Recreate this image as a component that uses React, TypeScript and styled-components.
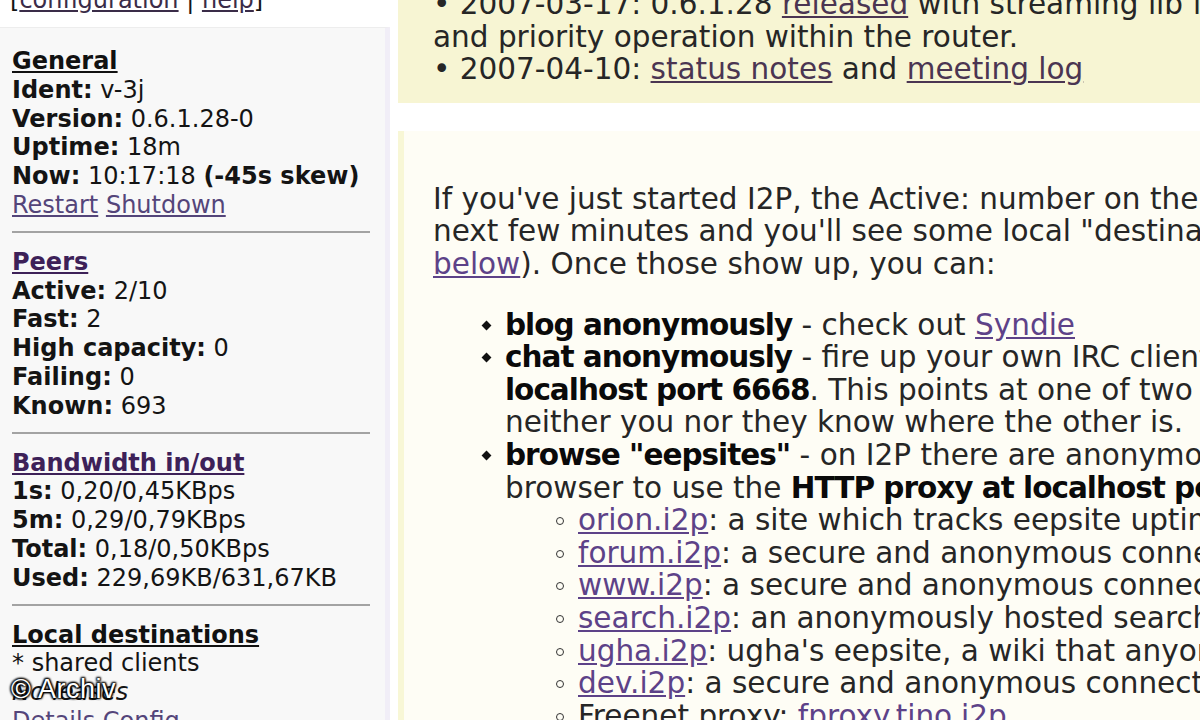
import React from 'react';
import styled, {createGlobalStyle} from "styled-components";

const GlobalStyle = createGlobalStyle`
    html, body {
        margin: 0;
        padding: 0;
        background: #ffffff;
        overflow: hidden;
    }
`

type Stat = { label: string; value: string };

const general: Stat[] = [
    {label: 'Ident:', value: 'v-3j'},
    {label: 'Version:', value: '0.6.1.28-0'},
    {label: 'Uptime:', value: '18m'},
];

const peers: Stat[] = [
    {label: 'Active:', value: '2/10'},
    {label: 'Fast:', value: '2'},
    {label: 'High capacity:', value: '0'},
    {label: 'Failing:', value: '0'},
    {label: 'Known:', value: '693'},
];

const bandwidth: Stat[] = [
    {label: '1s:', value: '0,20/0,45KBps'},
    {label: '5m:', value: '0,29/0,79KBps'},
    {label: 'Total:', value: '0,18/0,50KBps'},
    {label: 'Used:', value: '229,69KB/631,67KB'},
];

const eepsites = [
    {site: 'orion.i2p', text: ': a site which tracks eepsite uptime and changes'},
    {site: 'forum.i2p', text: ': a secure and anonymous connection to forum.i2p.net'},
    {site: 'www.i2p', text: ': a secure and anonymous connection to www.i2p.net'},
    {site: 'search.i2p', text: ': an anonymously hosted search engine of eepsites'},
    {site: 'ugha.i2p', text: ": ugha's eepsite, a wiki that anyone can edit, and lots of links"},
    {site: 'dev.i2p', text: ': a secure and anonymous connection to dev.i2p.net'},
];

const StatLines = ({items}: { items: Stat[] }) => (
    <>
        {items.map(s => (
            <Line key={s.label}><b>{s.label}</b> {s.value}</Line>
        ))}
    </>
);

export default function App() {
    return (
        <>
            <GlobalStyle/>
            <Page>
                <Sidebar>
                    <TopLinks>
                        [<NavLink>configuration</NavLink> | <NavLink>help</NavLink>]
                    </TopLinks>
                    <Panel>
                        <Heading>General</Heading>
                        <StatLines items={general}/>
                        <Line><b>Now:</b> 10:17:18 <b>(-45s skew)</b></Line>
                        <Line><ActionLink>Restart</ActionLink> <ActionLink>Shutdown</ActionLink></Line>
                        <Rule/>

                        <Heading $link>Peers</Heading>
                        <StatLines items={peers}/>
                        <Rule/>

                        <Heading $link>Bandwidth in/out</Heading>
                        <StatLines items={bandwidth}/>
                        <Rule/>

                        <Heading>Local destinations</Heading>
                        <Line>* shared clients</Line>
                        <Line><i>No leases</i></Line>
                        <Line><ActionLink>Details</ActionLink> <ActionLink>Config</ActionLink></Line>
                    </Panel>
                </Sidebar>

                <Main>
                    <NewsBox>
                        <Row>• 2007-03-17: 0.6.1.28 <TextLink $dark>released</TextLink> with streaming lib fixes, better timeouts</Row>
                        <Row>and priority operation within the router.</Row>
                        <Row>• 2007-04-10: <TextLink $dark>status notes</TextLink> and <TextLink $dark>meeting log</TextLink></Row>
                    </NewsBox>

                    <StartBox>
                        <Paragraph>
                            <Row>If you've just started I2P, the Active: number on the left should start growing over the</Row>
                            <Row>next few minutes and you'll see some local "destinations" listed on the left (if not, <TextLink>see</TextLink></Row>
                            <Row><TextLink>below</TextLink>). Once those show up, you can:</Row>
                        </Paragraph>

                        <List>
                            <Item>
                                <Row><Strong>blog anonymously</Strong> - check out <TextLink>Syndie</TextLink></Row>
                            </Item>
                            <Item>
                                <Row><Strong>chat anonymously</Strong> - fire up your own IRC client and connect to the server at</Row>
                                <Row><Strong>localhost port 6668</Strong>. This points at one of two IRC servers, with I2P hiding you and them,</Row>
                                <Row>neither you nor they know where the other is.</Row>
                            </Item>
                            <Item>
                                <Row><Strong>browse "eepsites"</Strong> - on I2P there are anonymously hosted websites - tell your</Row>
                                <Row>browser to use the <Strong>HTTP proxy at localhost port 4444</Strong>, then browse to an eepsite -</Row>
                                <SubList>
                                    {eepsites.map(e => (
                                        <SubItem key={e.site}>
                                            <Row><TextLink>{e.site}</TextLink>{e.text}</Row>
                                        </SubItem>
                                    ))}
                                    <SubItem>
                                        <Row>Freenet proxy: <TextLink>fproxy.tino.i2p</TextLink></Row>
                                    </SubItem>
                                </SubList>
                            </Item>
                        </List>
                    </StartBox>
                </Main>

                <Watermark>© Archiv</Watermark>
            </Page>
        </>
    );
}

const Page = styled.div`
    position: relative;
    display: flex;
    gap: 8px;
    width: 1200px;
    height: 720px;
    overflow: hidden;
`

const Sidebar = styled.aside`
    width: 390px;
    flex-shrink: 0;
    display: flex;
    flex-direction: column;
    font-family: "DejaVu Sans", Verdana, sans-serif;
    font-size: 24px;
    color: #141414;
`

const TopLinks = styled.div`
    height: 28px;
    line-height: 28px;
    margin-top: -14px;
    padding-left: 10px;
    white-space: nowrap;
`

const NavLink = styled.span`
    color: #3a2c48;
    text-decoration: underline;
`

const Panel = styled.div`
    flex: 1;
    margin-top: 13px;
    padding: 19px 0 0 12px;
    background: #f8f8f8;
    border-top: 1px solid #ededed;
    border-right: 5px solid #f1eef7;
`

const Line = styled.div`
    line-height: 28.8px;
    white-space: nowrap;
`

const Heading = styled.div<{ $link?: boolean }>`
    line-height: 28.8px;
    font-weight: bold;
    text-decoration: underline;
    color: ${p => (p.$link ? '#3d2158' : '#111111')};
`

const ActionLink = styled.span`
    color: #54457a;
    text-decoration: underline;
`

const Rule = styled.div`
    width: 358px;
    height: 2px;
    margin: 11px 0 15px;
    background: #a3a3a3;
`

const Main = styled.main`
    flex: 1;
    min-width: 0;
    overflow: hidden;
    font-family: "DejaVu Sans", Tahoma, sans-serif;
    font-size: 29.5px;
    line-height: 32.6px;
    color: #262626;
`

const NewsBox = styled.section`
    margin-top: -30px;
    padding: 18px 0 17px 35px;
    background: #f7f5d3;
`

const StartBox = styled.section`
    margin-top: 28px;
    min-height: 700px;
    padding: 52px 0 0 29px;
    background: #fefdf5;
    border-left: 6px solid #f8f7d6;
`

const Row = styled.div`
    white-space: nowrap;
`

const TextLink = styled.span<{ $dark?: boolean }>`
    color: ${p => (p.$dark ? '#4b3552' : '#5d4288')};
    text-decoration: underline;
`

const Paragraph = styled.div`
    margin-bottom: 28px;
`

const Strong = styled.b`
    color: #0a0a0a;
    letter-spacing: -1px;
`

const List = styled.ul`
    margin: 0;
    padding-left: 72px;
    list-style: none;
`

const Item = styled.li`
    position: relative;

    &::before {
        content: '';
        position: absolute;
        left: -22px;
        top: 13px;
        width: 7px;
        height: 7px;
        background: #111111;
        transform: rotate(45deg);
    }
`

const SubList = styled.ul`
    margin: 0;
    padding-left: 73px;
    list-style: none;
`

const SubItem = styled.li`
    position: relative;

    &::before {
        content: '';
        position: absolute;
        left: -22px;
        top: 13px;
        width: 6px;
        height: 6px;
        border: 1.5px solid #333333;
        border-radius: 50%;
    }
`

const Watermark = styled.div`
    position: absolute;
    left: 11px;
    top: 674px;
    font-family: "Liberation Sans", Arial, sans-serif;
    font-size: 27px;
    letter-spacing: 0.5px;
    color: #ffffff;
    text-shadow: 0 0 2px #000, 1px 1px 2px #000, -1px -1px 2px #000, 1px -1px 2px #000, -1px 1px 2px #000;
`
